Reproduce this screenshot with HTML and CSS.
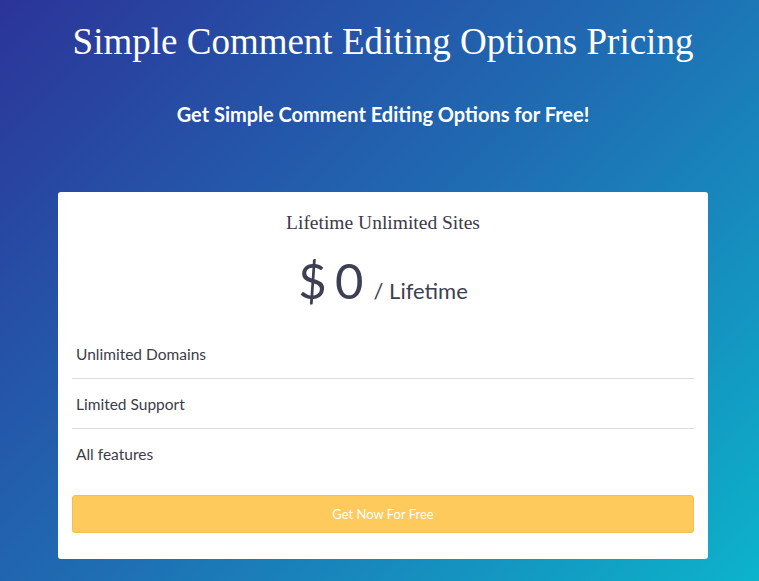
FILE: index.html
```html
<!DOCTYPE html>
<html>
<head>
<meta charset="utf-8">
<link rel="stylesheet" href="styles.css">
</head>
<body>
<div class="page">
  <h1 class="title">Simple Comment Editing Options Pricing</h1>
  <p class="subtitle">Get Simple Comment Editing Options for Free!</p>
  <div class="card">
    <h3 class="plan">Lifetime Unlimited Sites</h3>
    <div class="price"><span class="amount">$ 0</span><span class="period">/ Lifetime</span></div>
    <ul class="features">
      <li>Unlimited Domains</li>
      <li>Limited Support</li>
      <li>All features</li>
    </ul>
    <a class="btn">Get Now For Free</a>
  </div>
</div>
</body>
</html>
```
FILE: styles.css
```css
html, body {
  margin: 0;
  padding: 0;
}
body {
  width: 759px;
  height: 581px;
  overflow: hidden;
  background: linear-gradient(135deg, #2c3499 0%, #1f6db3 50%, #0cb3cb 100%);
  font-family: Lato, "Open Sans", sans-serif;
}
.page {
  display: flex;
  flex-direction: column;
  align-items: center;
  padding: 20px 0 0 7px;
}
.title {
  margin: 0;
  font-family: "Liberation Serif", serif;
  font-weight: normal;
  font-size: 37px;
  line-height: 44px;
  color: #fff;
}
.subtitle {
  margin: 38px 0 0;
  font-size: 20px;
  line-height: 24px;
  font-weight: bold;
  color: #fff;
}
.card {
  margin-top: 66px;
  width: 650px;
  box-sizing: border-box;
  background: #fff;
  border-radius: 3px;
  padding: 18px 14px 26px;
  display: flex;
  flex-direction: column;
  align-items: stretch;
}
.plan {
  margin: 0;
  text-align: center;
  font-family: "Liberation Serif", serif;
  font-weight: normal;
  font-size: 19.5px;
  line-height: 26px;
  color: #3c3a48;
}
.price {
  margin-top: 14px;
  display: flex;
  justify-content: center;
  align-items: baseline;
  color: #3d3f52;
}
.amount {
  font-size: 49px;
  line-height: 60px;
  letter-spacing: -2px;
}
.period {
  margin-left: 12px;
  font-size: 22px;
}
.features {
  list-style: none;
  margin: 19px 0 0;
  padding: 0;
}
.features li {
  padding: 15px 4px 14px;
  font-size: 15.5px;
  line-height: 20px;
  color: #3c3c48;
  border-bottom: 1px solid #ddd;
}
.features li:last-child {
  border-bottom: none;
}
.btn {
  margin-top: 17px;
  height: 38px;
  box-sizing: border-box;
  display: flex;
  align-items: center;
  justify-content: center;
  background: #fdca5b;
  border: 1px solid #f1c050;
  border-radius: 3px;
  color: #fff;
  font-size: 13px;
}
```
